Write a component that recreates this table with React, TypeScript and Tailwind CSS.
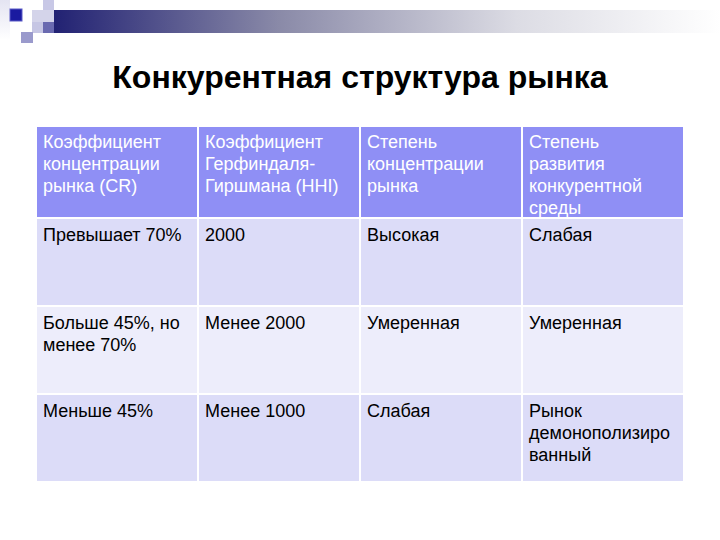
import React from "react"

const header = [
  ["Коэффициент", "концентрации", "рынка (CR)"],
  ["Коэффициент", "Герфиндаля-", "Гиршмана (HHI)"],
  ["Степень", "концентрации", "рынка"],
  ["Степень", "развития", "конкурентной", "среды"],
]

const rows = [
  {
    bg: "bg-[#dcdcf8]",
    cells: [["Превышает 70%"], ["2000"], ["Высокая"], ["Слабая"]],
  },
  {
    bg: "bg-[#ededfb]",
    cells: [["Больше 45%, но", "менее 70%"], ["Менее 2000"], ["Умеренная"], ["Умеренная"]],
  },
  {
    bg: "bg-[#dcdcf8]",
    cells: [["Меньше 45%"], ["Менее 1000"], ["Слабая"], ["Рынок", "демонополизиро", "ванный"]],
  },
]

const Decoration: React.FC = () => (
  <svg width="720" height="46" viewBox="0 0 720 46" className="block">
    <defs>
      <linearGradient id="bar" x1="0" x2="1" y1="0" y2="0">
        <stop offset="0" stopColor="#1c1c70" />
        <stop offset="0.35" stopColor="#8a8aa8" />
        <stop offset="0.7" stopColor="#dcdce4" />
        <stop offset="1" stopColor="#ffffff" />
      </linearGradient>
      <linearGradient id="side" x1="0" x2="0" y1="0" y2="1">
        <stop offset="0" stopColor="#e4e4f2" />
        <stop offset="1" stopColor="#ffffff" />
      </linearGradient>
    </defs>
    <rect x="0" y="0" width="10" height="40" fill="url(#side)" />
    <rect x="42" y="10" width="678" height="23" fill="url(#bar)" />
    <rect x="32" y="10" width="22" height="12" fill="#d4d4ea" />
    <rect x="32" y="22" width="11" height="11" fill="#c6c6e4" />
    <rect x="43" y="0" width="11" height="10" fill="#c8c8e6" />
    <rect x="43" y="22" width="11" height="11" fill="#6a6ab0" />
    <rect x="10" y="9" width="12" height="12" fill="#1a1aa0" stroke="#5a5ac8" strokeWidth="1" />
    <rect x="21" y="32" width="12" height="11" fill="#9a9acc" />
  </svg>
)

export default function App() {
  return (
    <div className="w-[720px] h-[540px] bg-white flex flex-col font-['Liberation_Sans',Arial,sans-serif]">
      <Decoration />
      <h1 className="mt-[13px] text-center text-[32px] leading-[36px] font-bold text-black">
        Конкурентная структура рынка
      </h1>
      <div className="ml-[37px] mt-[32px] w-[646px] grid grid-cols-4 gap-[2px] bg-white">
        {header.map((lines, i) => (
          <div key={i} className="bg-[#8f8ff5] h-[90px] pl-[6px] pt-[4px] text-white text-[18px] leading-[22px]">
            {lines.map((l, j) => (
              <div key={j}>{l}</div>
            ))}
          </div>
        ))}
        {rows.map((row, r) =>
          row.cells.map((lines, c) => (
            <div
              key={`${r}-${c}`}
              className={`${row.bg} h-[86px] pl-[6px] pt-[5px] text-black text-[18px] leading-[22px]`}
            >
              {lines.map((l, j) => (
                <div key={j}>{l}</div>
              ))}
            </div>
          ))
        )}
      </div>
    </div>
  )
}
